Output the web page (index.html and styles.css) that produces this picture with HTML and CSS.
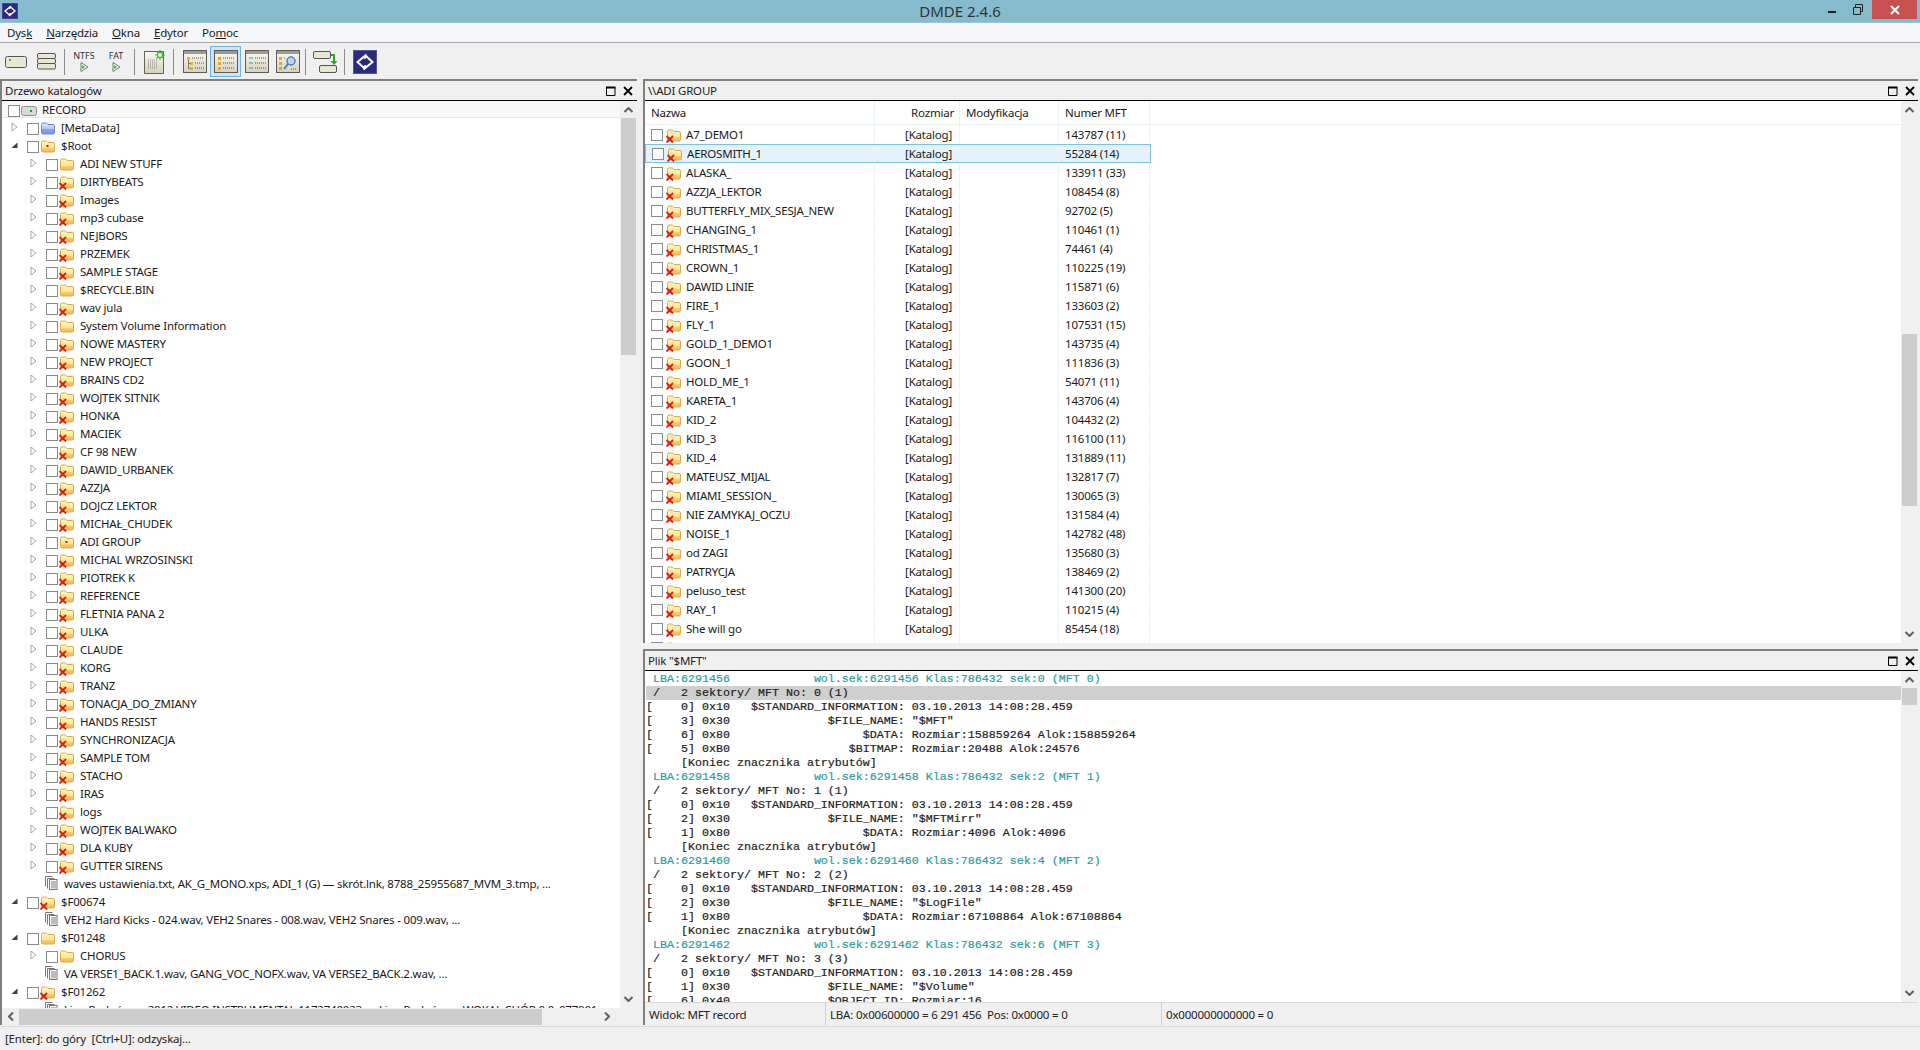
FILE: index.html
```html
<!DOCTYPE html>
<html lang="pl">
<head>
    <meta charset="UTF-8">
    <title>DMDE 2.4.6</title>
    <link rel="stylesheet" href="styles.css">
</head>
<body>
<svg class="defs" width="0" height="0">
    <defs>
        <linearGradient id="fold" x1="0" y1="0" x2="0" y2="1">
            <stop offset="0" stop-color="#fff5c4"/>
            <stop offset=".62" stop-color="#fee594"/>
            <stop offset=".68" stop-color="#f9cb6c"/>
            <stop offset="1" stop-color="#f4b854"/>
        </linearGradient>
        <linearGradient id="foldblue" x1="0" y1="0" x2="0" y2="1">
            <stop offset="0" stop-color="#dfe6fb"/>
            <stop offset=".5" stop-color="#b9c8f4"/>
            <stop offset=".55" stop-color="#88a4ec"/>
            <stop offset="1" stop-color="#7a98e6"/>
        </linearGradient>
        <linearGradient id="panelbg" x1="0" y1="0" x2="0" y2="1">
            <stop offset="0" stop-color="#fbfaf3"/>
            <stop offset="1" stop-color="#d5d1ba"/>
        </linearGradient>
        <symbol id="folder" viewBox="0 0 16 16">
            <path d="M1.500 12.500v-8a1.500 1.500 0 0 1 1.500-1.500h3.500l1.500 1.500h5a1.500 1.500 0 0 1 1.500 1.500v6.500a1.500 1.500 0 0 1-1.500 1.500h-10a1.500 1.500 0 0 1-1.500-1.500z" fill="url(#fold)" stroke="#dcaa48"/>
        </symbol>
        <symbol id="folder-x" viewBox="0 0 16 16">
            <path d="M1.500 12.500v-8a1.500 1.500 0 0 1 1.500-1.500h3.500l1.500 1.500h5a1.500 1.500 0 0 1 1.500 1.500v6.500a1.500 1.500 0 0 1-1.500 1.500h-10a1.500 1.500 0 0 1-1.500-1.500z" fill="url(#fold)" stroke="#dcaa48"/>
            <path d="M.5 9l6.500 6.500M7 9l-6.500 6.500" stroke="#e01818" stroke-width="1.800" fill="none"/>
        </symbol>
        <symbol id="folder-dot" viewBox="0 0 16 16">
            <path d="M1.500 12.500v-8a1.500 1.500 0 0 1 1.500-1.500h3.500l1.500 1.500h5a1.500 1.500 0 0 1 1.500 1.500v6.500a1.500 1.500 0 0 1-1.500 1.500h-10a1.500 1.500 0 0 1-1.500-1.500z" fill="url(#fold)" stroke="#dcaa48"/>
            <rect x="6.500" y="7" width="2" height="2" fill="#d81010"/>
        </symbol>
        <symbol id="folder-blue" viewBox="0 0 16 16">
            <path d="M1.500 12.500v-8a1.500 1.500 0 0 1 1.500-1.500h3.500l1.500 1.500h5a1.500 1.500 0 0 1 1.500 1.500v6.500a1.500 1.500 0 0 1-1.500 1.500h-10a1.500 1.500 0 0 1-1.500-1.500z" fill="url(#foldblue)" stroke="#6f86d8"/>
        </symbol>
        <symbol id="files" viewBox="0 0 14 16">
            <path d="M1.500 11.500v-10h7M3.500 13.500v-10h7" fill="none" stroke="#777"/>
            <rect x="5.500" y="4.500" width="7.500" height="10" fill="#fff" stroke="#777"/>
            <rect x="7" y="6" width="5" height="7.500" fill="#bbb"/>
        </symbol>
        <symbol id="closed" viewBox="0 0 7 10">
            <path d="M1 1l5 4-5 4z" fill="#fff" stroke="#a6a6a6"/>
        </symbol>
        <symbol id="open" viewBox="0 0 7 10">
            <path d="M6.500 2.500v5.500h-6z" fill="#404040"/>
        </symbol>
        <symbol id="disk" viewBox="0 0 16 10">
            <rect x=".5" y=".5" width="15" height="9" rx="2" fill="#d9d9d9" stroke="#909090"/>
            <rect x="9" y="4" width="2" height="2" fill="#14a514"/>
        </symbol>
        <symbol id="up" viewBox="0 0 9 6"><path d="M.5 5l4-4 4 4" fill="none" stroke="#606060" stroke-width="2"/></symbol>
        <symbol id="down" viewBox="0 0 9 6"><path d="M.5 1l4 4 4-4" fill="none" stroke="#606060" stroke-width="2"/></symbol>
        <symbol id="left" viewBox="0 0 6 9"><path d="M5 .5l-4 4 4 4" fill="none" stroke="#606060" stroke-width="2"/></symbol>
        <symbol id="right" viewBox="0 0 6 9"><path d="M1 .5l4 4-4 4" fill="none" stroke="#606060" stroke-width="2"/></symbol>
        <symbol id="maximize" viewBox="0 0 10 10"><path d="M.5 1.500h8.500v8h-8.500z" fill="none" stroke="#000"/><path d="M0 1.500h9.500" stroke="#000" stroke-width="2"/></symbol>
        <symbol id="cross" viewBox="0 0 10 10"><path d="M1 1l8 8M9 1l-8 8" stroke="#000" stroke-width="1.800"/></symbol>
        <symbol id="play" viewBox="0 0 9 10"><path d="M1 .5l7 4.500-7 4.500z" fill="#f4f4f4" stroke="#777"/><path d="M2 3v4l3.500-2z" fill="#5cc040"/></symbol>
        <symbol id="logo" viewBox="0 0 24 24">
            <rect width="24" height="24" fill="#2b2b7e"/>
            <rect x=".5" y=".5" width="23" height="23" fill="none" stroke="#55558f"/>
            <path d="M13.500 4.500l-9 7.500 6 5.500 2.500-2M10.500 19.500l9-7.500-6-5.500-2.500 2" fill="none" stroke="#fff" stroke-width="2"/>
        </symbol>
        <symbol id="panel" viewBox="0 0 24 23">
            <rect x=".5" y=".5" width="23" height="22" fill="url(#panelbg)" stroke="#5c5c56"/>
            <rect x="1" y="1" width="22" height="3" fill="#9a9a92"/>
        </symbol>
    </defs>
</svg>

<div class="titlebar">
    <div class="title-left">
        <svg class="app-icon"><use href="#logo"/></svg>
    </div>
    <div class="title-text">DMDE 2.4.6</div>
    <div class="win-controls">
        <svg class="win-btn" width="26" height="20" viewBox="0 0 26 20"><rect x="8" y="11" width="8" height="2" fill="#222"/></svg>
        <svg class="win-btn" width="26" height="20" viewBox="0 0 26 20"><path d="M7.500 7.500h7v7h-7zM9.500 7v-2.500h7v7h-2" fill="none" stroke="#222" stroke-width="1"/></svg>
        <div class="win-close">
            <svg width="10" height="10" viewBox="0 0 10 10"><path d="M1 1l8 8M9 1l-8 8" stroke="#fff" stroke-width="2"/></svg>
        </div>
    </div>
</div>

<div class="menubar">
    <span class="menu-item">Dys<u>k</u></span>
    <span class="menu-item"><u>N</u>arzędzia</span>
    <span class="menu-item"><u>O</u>kna</span>
    <span class="menu-item"><u>E</u>dytor</span>
    <span class="menu-item">Po<u>m</u>oc</span>
</div>

<div class="toolbar">
    <div class="tool">
        <svg width="22" height="12" viewBox="0 0 22 12"><rect x=".5" y=".5" width="21" height="11" rx="2" fill="#e9e6d4" stroke="#555"/><rect x="4" y="3" width="2" height="2" fill="#2fc82f"/></svg>
    </div>
    <div class="tool">
        <svg width="19" height="17" viewBox="0 0 19 17"><g fill="#e9e6d4" stroke="#555"><rect x=".5" y=".5" width="18" height="5" rx="1.500"/><rect x=".5" y="5.500" width="18" height="5" rx="1.500"/><rect x=".5" y="10.500" width="18" height="5.500" rx="1.500"/></g></svg>
    </div>
    <div class="sep"></div>
    <div class="tool tool-text">
        <span class="tool-label">NTFS</span>
        <svg width="9" height="10"><use href="#play"/></svg>
    </div>
    <div class="tool tool-text">
        <span class="tool-label">FAT</span>
        <svg width="9" height="10"><use href="#play"/></svg>
    </div>
    <div class="sep"></div>
    <div class="tool tool-wide">
        <svg width="22" height="24" viewBox="0 0 22 24">
            <rect x=".5" y="1.500" width="19" height="22" fill="url(#panelbg)" stroke="#66665f"/>
            <path d="M4 10h10M4 12h10M4 14h10M4 16h10M4 18h10" stroke="#8a8a84" stroke-dasharray="1 1"/>
            <path d="M16 0v10M11 5h10M12.500 1.500l7 7M19.500 1.500l-7 7" stroke="#35c035" stroke-width="1.200"/>
            <circle cx="16" cy="5" r="2.500" fill="#eaffd8" stroke="#35a035"/>
        </svg>
    </div>
    <div class="sep sep-after"></div>
    <div class="tool">
        <svg width="24" height="23" viewBox="0 0 24 23">
            <use href="#panel" width="24" height="23"/>
            <path d="M4 7h3v3h-3zM7 12h3v3h-3zM7 17h3v3h-3z" fill="#e6b33a"/>
            <path d="M5.500 10v8.500h2M5.500 13.500h2" fill="none" stroke="#777"/>
            <path d="M9 8h12M12 13h9M12 18h9" stroke="#555" stroke-dasharray="1 1"/>
        </svg>
    </div>
    <div class="tool tool-active">
        <svg width="24" height="23" viewBox="0 0 24 23">
            <use href="#panel" width="24" height="23"/>
            <path d="M4 7h3v3h-3zM4 12h3v3h-3zM4 17h3v3h-3z" fill="#e6a62a"/>
            <path d="M9 8h12M9 13h12M9 18h12" stroke="#555" stroke-dasharray="1 1"/>
        </svg>
    </div>
    <div class="tool">
        <svg width="24" height="23" viewBox="0 0 24 23">
            <use href="#panel" width="24" height="23"/>
            <path d="M4 8h4M4 13h4M4 18h4" stroke="#22b3a0" stroke-width="1.200"/>
            <path d="M10 8h11M10 13h11M10 18h11" stroke="#555" stroke-dasharray="1 1"/>
        </svg>
    </div>
    <div class="tool">
        <svg width="24" height="23" viewBox="0 0 24 23">
            <use href="#panel" width="24" height="23"/>
            <path d="M3 7h3v3h-3zM3 12h3v3h-3zM3 17h3v3h-3z" fill="#e6a62a"/>
            <circle cx="15" cy="11" r="4" fill="#bcd9f2" stroke="#4a82c0" stroke-width="1.500"/>
            <path d="M12 14l-4 5" stroke="#4a82c0" stroke-width="2"/>
            <path d="M8 8h2M15 19h6" stroke="#555" stroke-dasharray="1 1"/>
        </svg>
    </div>
    <div class="sep"></div>
    <div class="tool tool-wide">
        <svg width="25" height="22" viewBox="0 0 25 22">
            <g fill="#e9e6d4" stroke="#555"><rect x=".5" y=".5" width="17" height="7" rx="1.500"/><rect x="6.500" y="14.500" width="17" height="7" rx="1.500"/></g>
            <path d="M18 4h3v7" fill="none" stroke="#2ea62e" stroke-width="2"/>
            <path d="M17.500 10h7l-3.500 4z" fill="#2ea62e"/>
        </svg>
    </div>
    <div class="sep"></div>
    <div class="tool tool-wide">
        <svg width="24" height="24"><use href="#logo"/></svg>
    </div>
</div>

<div class="workspace">
    <section class="pane tree-pane">
        <header class="pane-title">
            <span>Drzewo katalogów</span>
            <svg class="pane-btn"><use href="#maximize"/></svg>
            <svg class="pane-btn pane-btn-close"><use href="#cross"/></svg>
        </header>
        <div class="tree-body">
            <div class="tree-scroll">
                <div class="tree-root"><span class="check"></span><svg class="ico disk"><use href="#disk"/></svg><span class="label">RECORD</span></div>
                <div class="tree-row l1"><svg class="exp"><use href="#closed"/></svg><span class="check"></span><svg class="ico"><use href="#folder-blue"/></svg><span class="label">[MetaData]</span></div>
                <div class="tree-row l1"><svg class="exp"><use href="#open"/></svg><span class="check"></span><svg class="ico"><use href="#folder-dot"/></svg><span class="label">$Root</span></div>
                <div class="tree-row l2"><svg class="exp"><use href="#closed"/></svg><span class="check"></span><svg class="ico"><use href="#folder"/></svg><span class="label">ADI NEW STUFF</span></div>
                <div class="tree-row l2"><svg class="exp"><use href="#closed"/></svg><span class="check"></span><svg class="ico"><use href="#folder-x"/></svg><span class="label">DIRTYBEATS</span></div>
                <div class="tree-row l2"><svg class="exp"><use href="#closed"/></svg><span class="check"></span><svg class="ico"><use href="#folder-x"/></svg><span class="label">Images</span></div>
                <div class="tree-row l2"><svg class="exp"><use href="#closed"/></svg><span class="check"></span><svg class="ico"><use href="#folder-x"/></svg><span class="label">mp3 cubase</span></div>
                <div class="tree-row l2"><svg class="exp"><use href="#closed"/></svg><span class="check"></span><svg class="ico"><use href="#folder-x"/></svg><span class="label">NEJBORS</span></div>
                <div class="tree-row l2"><svg class="exp"><use href="#closed"/></svg><span class="check"></span><svg class="ico"><use href="#folder-x"/></svg><span class="label">PRZEMEK</span></div>
                <div class="tree-row l2"><svg class="exp"><use href="#closed"/></svg><span class="check"></span><svg class="ico"><use href="#folder-x"/></svg><span class="label">SAMPLE STAGE</span></div>
                <div class="tree-row l2"><svg class="exp"><use href="#closed"/></svg><span class="check"></span><svg class="ico"><use href="#folder"/></svg><span class="label">$RECYCLE.BIN</span></div>
                <div class="tree-row l2"><svg class="exp"><use href="#closed"/></svg><span class="check"></span><svg class="ico"><use href="#folder-x"/></svg><span class="label">wav jula</span></div>
                <div class="tree-row l2"><svg class="exp"><use href="#closed"/></svg><span class="check"></span><svg class="ico"><use href="#folder"/></svg><span class="label">System Volume Information</span></div>
                <div class="tree-row l2"><svg class="exp"><use href="#closed"/></svg><span class="check"></span><svg class="ico"><use href="#folder-x"/></svg><span class="label">NOWE MASTERY</span></div>
                <div class="tree-row l2"><svg class="exp"><use href="#closed"/></svg><span class="check"></span><svg class="ico"><use href="#folder-x"/></svg><span class="label">NEW PROJECT</span></div>
                <div class="tree-row l2"><svg class="exp"><use href="#closed"/></svg><span class="check"></span><svg class="ico"><use href="#folder-x"/></svg><span class="label">BRAINS CD2</span></div>
                <div class="tree-row l2"><svg class="exp"><use href="#closed"/></svg><span class="check"></span><svg class="ico"><use href="#folder-x"/></svg><span class="label">WOJTEK SITNIK</span></div>
                <div class="tree-row l2"><svg class="exp"><use href="#closed"/></svg><span class="check"></span><svg class="ico"><use href="#folder-x"/></svg><span class="label">HONKA</span></div>
                <div class="tree-row l2"><svg class="exp"><use href="#closed"/></svg><span class="check"></span><svg class="ico"><use href="#folder-x"/></svg><span class="label">MACIEK</span></div>
                <div class="tree-row l2"><svg class="exp"><use href="#closed"/></svg><span class="check"></span><svg class="ico"><use href="#folder-x"/></svg><span class="label">CF 98 NEW</span></div>
                <div class="tree-row l2"><svg class="exp"><use href="#closed"/></svg><span class="check"></span><svg class="ico"><use href="#folder-x"/></svg><span class="label">DAWID_URBANEK</span></div>
                <div class="tree-row l2"><svg class="exp"><use href="#closed"/></svg><span class="check"></span><svg class="ico"><use href="#folder-x"/></svg><span class="label">AZZJA</span></div>
                <div class="tree-row l2"><svg class="exp"><use href="#closed"/></svg><span class="check"></span><svg class="ico"><use href="#folder-x"/></svg><span class="label">DOJCZ LEKTOR</span></div>
                <div class="tree-row l2"><svg class="exp"><use href="#closed"/></svg><span class="check"></span><svg class="ico"><use href="#folder-x"/></svg><span class="label">MICHAŁ_CHUDEK</span></div>
                <div class="tree-row l2"><svg class="exp"><use href="#closed"/></svg><span class="check"></span><svg class="ico"><use href="#folder-dot"/></svg><span class="label">ADI GROUP</span></div>
                <div class="tree-row l2"><svg class="exp"><use href="#closed"/></svg><span class="check"></span><svg class="ico"><use href="#folder-x"/></svg><span class="label">MICHAL WRZOSINSKI</span></div>
                <div class="tree-row l2"><svg class="exp"><use href="#closed"/></svg><span class="check"></span><svg class="ico"><use href="#folder-x"/></svg><span class="label">PIOTREK K</span></div>
                <div class="tree-row l2"><svg class="exp"><use href="#closed"/></svg><span class="check"></span><svg class="ico"><use href="#folder-x"/></svg><span class="label">REFERENCE</span></div>
                <div class="tree-row l2"><svg class="exp"><use href="#closed"/></svg><span class="check"></span><svg class="ico"><use href="#folder-x"/></svg><span class="label">FLETNIA PANA 2</span></div>
                <div class="tree-row l2"><svg class="exp"><use href="#closed"/></svg><span class="check"></span><svg class="ico"><use href="#folder-x"/></svg><span class="label">ULKA</span></div>
                <div class="tree-row l2"><svg class="exp"><use href="#closed"/></svg><span class="check"></span><svg class="ico"><use href="#folder-x"/></svg><span class="label">CLAUDE</span></div>
                <div class="tree-row l2"><svg class="exp"><use href="#closed"/></svg><span class="check"></span><svg class="ico"><use href="#folder-x"/></svg><span class="label">KORG</span></div>
                <div class="tree-row l2"><svg class="exp"><use href="#closed"/></svg><span class="check"></span><svg class="ico"><use href="#folder-x"/></svg><span class="label">TRANZ</span></div>
                <div class="tree-row l2"><svg class="exp"><use href="#closed"/></svg><span class="check"></span><svg class="ico"><use href="#folder-x"/></svg><span class="label">TONACJA_DO_ZMIANY</span></div>
                <div class="tree-row l2"><svg class="exp"><use href="#closed"/></svg><span class="check"></span><svg class="ico"><use href="#folder-x"/></svg><span class="label">HANDS RESIST</span></div>
                <div class="tree-row l2"><svg class="exp"><use href="#closed"/></svg><span class="check"></span><svg class="ico"><use href="#folder-x"/></svg><span class="label">SYNCHRONIZACJA</span></div>
                <div class="tree-row l2"><svg class="exp"><use href="#closed"/></svg><span class="check"></span><svg class="ico"><use href="#folder-x"/></svg><span class="label">SAMPLE TOM</span></div>
                <div class="tree-row l2"><svg class="exp"><use href="#closed"/></svg><span class="check"></span><svg class="ico"><use href="#folder-x"/></svg><span class="label">STACHO</span></div>
                <div class="tree-row l2"><svg class="exp"><use href="#closed"/></svg><span class="check"></span><svg class="ico"><use href="#folder-x"/></svg><span class="label">IRAS</span></div>
                <div class="tree-row l2"><svg class="exp"><use href="#closed"/></svg><span class="check"></span><svg class="ico"><use href="#folder-x"/></svg><span class="label">logs</span></div>
                <div class="tree-row l2"><svg class="exp"><use href="#closed"/></svg><span class="check"></span><svg class="ico"><use href="#folder-x"/></svg><span class="label">WOJTEK BALWAKO</span></div>
                <div class="tree-row l2"><svg class="exp"><use href="#closed"/></svg><span class="check"></span><svg class="ico"><use href="#folder-x"/></svg><span class="label">DLA KUBY</span></div>
                <div class="tree-row l2"><svg class="exp"><use href="#closed"/></svg><span class="check"></span><svg class="ico"><use href="#folder-x"/></svg><span class="label">GUTTER SIRENS</span></div>
                <div class="tree-row file-row"><svg class="file-ico"><use href="#files"/></svg><span class="label">waves ustawienia.txt, AK_G_MONO.xps, ADI_1 (G) — skrót.lnk, 8788_25955687_MVM_3.tmp, ...</span></div>
                <div class="tree-row l1"><svg class="exp"><use href="#open"/></svg><span class="check"></span><svg class="ico"><use href="#folder-x"/></svg><span class="label">$F00674</span></div>
                <div class="tree-row file-row"><svg class="file-ico"><use href="#files"/></svg><span class="label">VEH2 Hard Kicks - 024.wav, VEH2 Snares - 008.wav, VEH2 Snares - 009.wav, ...</span></div>
                <div class="tree-row l1"><svg class="exp"><use href="#open"/></svg><span class="check"></span><svg class="ico"><use href="#folder"/></svg><span class="label">$F01248</span></div>
                <div class="tree-row l2"><svg class="exp"><use href="#closed"/></svg><span class="check"></span><svg class="ico"><use href="#folder"/></svg><span class="label">CHORUS</span></div>
                <div class="tree-row file-row"><svg class="file-ico"><use href="#files"/></svg><span class="label">VA VERSE1_BACK.1.wav, GANG_VOC_NOFX.wav, VA VERSE2_BACK.2.wav, ...</span></div>
                <div class="tree-row l1"><svg class="exp"><use href="#open"/></svg><span class="check"></span><svg class="ico"><use href="#folder-x"/></svg><span class="label">$F01262</span></div>
                <div class="tree-row file-row"><svg class="file-ico"><use href="#files"/></svg><span class="label">Lipa Podgórze - 2012 VIDEO INSTRUMENTAL 1172740023 ..., Lipa Podgórze - WOKAL CHÓR 0.0_077901</span></div>
            </div>
            <div class="vscroll">
                <svg class="arrow"><use href="#up"/></svg>
                <div class="thumb tree-thumb"></div>
                <svg class="arrow arrow-end"><use href="#down"/></svg>
            </div>
        </div>
        <div class="hscroll">
            <svg class="arrow-h"><use href="#left"/></svg>
            <div class="hthumb"></div>
            <svg class="arrow-h arrow-h-end"><use href="#right"/></svg>
        </div>
    </section>

    <div class="right-col">
        <section class="pane list-pane">
            <header class="pane-title">
                <span>\\ADI GROUP</span>
                <svg class="pane-btn"><use href="#maximize"/></svg>
                <svg class="pane-btn pane-btn-close"><use href="#cross"/></svg>
            </header>
            <div class="list-body">
                <div class="list-scroll">
                    <div class="list-head">
                        <div class="col col-name">Nazwa</div>
                        <div class="col col-size">Rozmiar</div>
                        <div class="col col-mod">Modyfikacja</div>
                        <div class="col col-mft">Numer MFT</div>
                    </div>
                    <div class="list-row"><div class="col col-name"><span class="check"></span><svg class="ico"><use href="#folder-x"/></svg>A7_DEMO1</div><div class="col col-size">[Katalog]</div><div class="col col-mod"></div><div class="col col-mft">143787 (11)</div></div>
                    <div class="list-row selected"><div class="col col-name"><span class="check"></span><svg class="ico"><use href="#folder-x"/></svg>AEROSMITH_1</div><div class="col col-size">[Katalog]</div><div class="col col-mod"></div><div class="col col-mft">55284 (14)</div></div>
                    <div class="list-row"><div class="col col-name"><span class="check"></span><svg class="ico"><use href="#folder-x"/></svg>ALASKA_</div><div class="col col-size">[Katalog]</div><div class="col col-mod"></div><div class="col col-mft">133911 (33)</div></div>
                    <div class="list-row"><div class="col col-name"><span class="check"></span><svg class="ico"><use href="#folder-x"/></svg>AZZJA_LEKTOR</div><div class="col col-size">[Katalog]</div><div class="col col-mod"></div><div class="col col-mft">108454 (8)</div></div>
                    <div class="list-row"><div class="col col-name"><span class="check"></span><svg class="ico"><use href="#folder-x"/></svg>BUTTERFLY_MIX_SESJA_NEW</div><div class="col col-size">[Katalog]</div><div class="col col-mod"></div><div class="col col-mft">92702 (5)</div></div>
                    <div class="list-row"><div class="col col-name"><span class="check"></span><svg class="ico"><use href="#folder-x"/></svg>CHANGING_1</div><div class="col col-size">[Katalog]</div><div class="col col-mod"></div><div class="col col-mft">110461 (1)</div></div>
                    <div class="list-row"><div class="col col-name"><span class="check"></span><svg class="ico"><use href="#folder-x"/></svg>CHRISTMAS_1</div><div class="col col-size">[Katalog]</div><div class="col col-mod"></div><div class="col col-mft">74461 (4)</div></div>
                    <div class="list-row"><div class="col col-name"><span class="check"></span><svg class="ico"><use href="#folder-x"/></svg>CROWN_1</div><div class="col col-size">[Katalog]</div><div class="col col-mod"></div><div class="col col-mft">110225 (19)</div></div>
                    <div class="list-row"><div class="col col-name"><span class="check"></span><svg class="ico"><use href="#folder-x"/></svg>DAWID LINIE</div><div class="col col-size">[Katalog]</div><div class="col col-mod"></div><div class="col col-mft">115871 (6)</div></div>
                    <div class="list-row"><div class="col col-name"><span class="check"></span><svg class="ico"><use href="#folder-x"/></svg>FIRE_1</div><div class="col col-size">[Katalog]</div><div class="col col-mod"></div><div class="col col-mft">133603 (2)</div></div>
                    <div class="list-row"><div class="col col-name"><span class="check"></span><svg class="ico"><use href="#folder-x"/></svg>FLY_1</div><div class="col col-size">[Katalog]</div><div class="col col-mod"></div><div class="col col-mft">107531 (15)</div></div>
                    <div class="list-row"><div class="col col-name"><span class="check"></span><svg class="ico"><use href="#folder-x"/></svg>GOLD_1_DEMO1</div><div class="col col-size">[Katalog]</div><div class="col col-mod"></div><div class="col col-mft">143735 (4)</div></div>
                    <div class="list-row"><div class="col col-name"><span class="check"></span><svg class="ico"><use href="#folder-x"/></svg>GOON_1</div><div class="col col-size">[Katalog]</div><div class="col col-mod"></div><div class="col col-mft">111836 (3)</div></div>
                    <div class="list-row"><div class="col col-name"><span class="check"></span><svg class="ico"><use href="#folder-x"/></svg>HOLD_ME_1</div><div class="col col-size">[Katalog]</div><div class="col col-mod"></div><div class="col col-mft">54071 (11)</div></div>
                    <div class="list-row"><div class="col col-name"><span class="check"></span><svg class="ico"><use href="#folder-x"/></svg>KARETA_1</div><div class="col col-size">[Katalog]</div><div class="col col-mod"></div><div class="col col-mft">143706 (4)</div></div>
                    <div class="list-row"><div class="col col-name"><span class="check"></span><svg class="ico"><use href="#folder-x"/></svg>KID_2</div><div class="col col-size">[Katalog]</div><div class="col col-mod"></div><div class="col col-mft">104432 (2)</div></div>
                    <div class="list-row"><div class="col col-name"><span class="check"></span><svg class="ico"><use href="#folder-x"/></svg>KID_3</div><div class="col col-size">[Katalog]</div><div class="col col-mod"></div><div class="col col-mft">116100 (11)</div></div>
                    <div class="list-row"><div class="col col-name"><span class="check"></span><svg class="ico"><use href="#folder-x"/></svg>KID_4</div><div class="col col-size">[Katalog]</div><div class="col col-mod"></div><div class="col col-mft">131889 (11)</div></div>
                    <div class="list-row"><div class="col col-name"><span class="check"></span><svg class="ico"><use href="#folder-x"/></svg>MATEUSZ_MIJAL</div><div class="col col-size">[Katalog]</div><div class="col col-mod"></div><div class="col col-mft">132817 (7)</div></div>
                    <div class="list-row"><div class="col col-name"><span class="check"></span><svg class="ico"><use href="#folder-x"/></svg>MIAMI_SESSION_</div><div class="col col-size">[Katalog]</div><div class="col col-mod"></div><div class="col col-mft">130065 (3)</div></div>
                    <div class="list-row"><div class="col col-name"><span class="check"></span><svg class="ico"><use href="#folder-x"/></svg>NIE ZAMYKAJ_OCZU</div><div class="col col-size">[Katalog]</div><div class="col col-mod"></div><div class="col col-mft">131584 (4)</div></div>
                    <div class="list-row"><div class="col col-name"><span class="check"></span><svg class="ico"><use href="#folder-x"/></svg>NOISE_1</div><div class="col col-size">[Katalog]</div><div class="col col-mod"></div><div class="col col-mft">142782 (48)</div></div>
                    <div class="list-row"><div class="col col-name"><span class="check"></span><svg class="ico"><use href="#folder-x"/></svg>od ZAGI</div><div class="col col-size">[Katalog]</div><div class="col col-mod"></div><div class="col col-mft">135680 (3)</div></div>
                    <div class="list-row"><div class="col col-name"><span class="check"></span><svg class="ico"><use href="#folder-x"/></svg>PATRYCJA</div><div class="col col-size">[Katalog]</div><div class="col col-mod"></div><div class="col col-mft">138469 (2)</div></div>
                    <div class="list-row"><div class="col col-name"><span class="check"></span><svg class="ico"><use href="#folder-x"/></svg>peluso_test</div><div class="col col-size">[Katalog]</div><div class="col col-mod"></div><div class="col col-mft">141300 (20)</div></div>
                    <div class="list-row"><div class="col col-name"><span class="check"></span><svg class="ico"><use href="#folder-x"/></svg>RAY_1</div><div class="col col-size">[Katalog]</div><div class="col col-mod"></div><div class="col col-mft">110215 (4)</div></div>
                    <div class="list-row"><div class="col col-name"><span class="check"></span><svg class="ico"><use href="#folder-x"/></svg>She will go</div><div class="col col-size">[Katalog]</div><div class="col col-mod"></div><div class="col col-mft">85454 (18)</div></div>
                    <div class="list-row"><div class="col col-name"><span class="check"></span><svg class="ico"><use href="#folder-x"/></svg></div><div class="col col-size"></div><div class="col col-mod"></div><div class="col col-mft"></div></div>
                </div>
                <div class="vscroll">
                    <svg class="arrow"><use href="#up"/></svg>
                    <div class="thumb list-thumb"></div>
                    <svg class="arrow arrow-end"><use href="#down"/></svg>
                </div>
            </div>
        </section>

        <section class="pane log-pane">
            <header class="pane-title">
                <span>Plik "$MFT"</span>
                <svg class="pane-btn"><use href="#maximize"/></svg>
                <svg class="pane-btn pane-btn-close"><use href="#cross"/></svg>
            </header>
            <div class="log-body">
                <div class="log-scroll">
<pre class="log-row lba"> LBA:6291456            wol.sek:6291456 Klas:786432 sek:0 (MFT 0)</pre>
<pre class="log-row current"> /   2 sektory/ MFT No: 0 (1)</pre>
<pre class="log-row">[    0] 0x10   $STANDARD_INFORMATION: 03.10.2013 14:08:28.459</pre>
<pre class="log-row">[    3] 0x30              $FILE_NAME: "$MFT"</pre>
<pre class="log-row">[    6] 0x80                   $DATA: Rozmiar:158859264 Alok:158859264</pre>
<pre class="log-row">[    5] 0xB0                 $BITMAP: Rozmiar:20488 Alok:24576</pre>
<pre class="log-row">     [Koniec znacznika atrybutów]</pre>
<pre class="log-row lba"> LBA:6291458            wol.sek:6291458 Klas:786432 sek:2 (MFT 1)</pre>
<pre class="log-row"> /   2 sektory/ MFT No: 1 (1)</pre>
<pre class="log-row">[    0] 0x10   $STANDARD_INFORMATION: 03.10.2013 14:08:28.459</pre>
<pre class="log-row">[    2] 0x30              $FILE_NAME: "$MFTMirr"</pre>
<pre class="log-row">[    1] 0x80                   $DATA: Rozmiar:4096 Alok:4096</pre>
<pre class="log-row">     [Koniec znacznika atrybutów]</pre>
<pre class="log-row lba"> LBA:6291460            wol.sek:6291460 Klas:786432 sek:4 (MFT 2)</pre>
<pre class="log-row"> /   2 sektory/ MFT No: 2 (2)</pre>
<pre class="log-row">[    0] 0x10   $STANDARD_INFORMATION: 03.10.2013 14:08:28.459</pre>
<pre class="log-row">[    2] 0x30              $FILE_NAME: "$LogFile"</pre>
<pre class="log-row">[    1] 0x80                   $DATA: Rozmiar:67108864 Alok:67108864</pre>
<pre class="log-row">     [Koniec znacznika atrybutów]</pre>
<pre class="log-row lba"> LBA:6291462            wol.sek:6291462 Klas:786432 sek:6 (MFT 3)</pre>
<pre class="log-row"> /   2 sektory/ MFT No: 3 (3)</pre>
<pre class="log-row">[    0] 0x10   $STANDARD_INFORMATION: 03.10.2013 14:08:28.459</pre>
<pre class="log-row">[    1] 0x30              $FILE_NAME: "$Volume"</pre>
<pre class="log-row">[    6] 0x40              $OBJECT_ID: Rozmiar:16</pre>
                </div>
                <div class="vscroll">
                    <svg class="arrow"><use href="#up"/></svg>
                    <div class="thumb log-thumb"></div>
                    <svg class="arrow arrow-end"><use href="#down"/></svg>
                </div>
            </div>
            <div class="log-status">
                <div class="cell cell-view">Widok: MFT record</div>
                <div class="cell cell-pos">LBA: 0x00600000 = 6 291 456&nbsp; Pos: 0x0000 = 0</div>
                <div class="cell">0x000000000000 = 0</div>
            </div>
        </section>
    </div>
</div>

<div class="statusbar">[Enter]: do góry&nbsp; [Ctrl+U]: odzyskaj...</div>
</body>
</html>
```

FILE: styles.css
```css
* {
    box-sizing: border-box;
}

html, body {
    margin: 0;
    padding: 0;
}

body {
    width: 1920px;
    height: 1050px;
    overflow: hidden;
    display: flex;
    flex-direction: column;
    background: #f0f0f0;
    color: #1a1a1a;
    font-family: "Noto Sans", "Liberation Sans", sans-serif;
    font-size: 11.5px;
    letter-spacing: -0.2px;
}

.defs {
    position: absolute;
}

/* title */
.titlebar {
    height: 23px;
    flex: none;
    display: grid;
    grid-template-columns: 1fr auto 1fr;
    background: #85bbcd;
    border-bottom: 1px solid #9cc6d4;
}

.app-icon {
    display: block;
    width: 16px;
    height: 16px;
    margin: 3px 0 0 2px;
}

.title-text {
    font-size: 15px;
    letter-spacing: 0;
    line-height: 22px;
    color: #333;
}

.win-controls {
    display: flex;
    justify-content: flex-end;
    padding-right: 3px;
}

.win-close {
    width: 45px;
    height: 19px;
    background: #c75050;
    display: flex;
    align-items: center;
    justify-content: center;
}

/* menu + toolbar */
.menubar {
    height: 20px;
    flex: none;
    display: flex;
    padding-left: 7px;
    gap: 14px;
    background: #f5f6fa;
    border-bottom: 1px solid #aaa;
    line-height: 19px;
}

.menu-item u {
    text-underline-offset: 1px;
}

.toolbar {
    height: 36px;
    flex: none;
    display: flex;
    align-items: center;
    background: #f0f0f0;
    padding-top: 1px;
}

.tool {
    width: 31px;
    height: 31px;
    flex: none;
    display: flex;
    align-items: center;
    justify-content: center;
}

.tool-wide {
    width: 33px;
}

.tool-text {
    width: 32px;
    flex-direction: column;
    gap: 1px;
}

.tool-label {
    font-size: 9px;
    letter-spacing: 0;
    line-height: 10px;
    color: #333;
}

.tool-active {
    background: #cfe4f7;
    border: 1px solid #6fb1e8;
}

.sep {
    width: 1px;
    height: 26px;
    flex: none;
    background: #8c8c8c;
    margin: 0 3px 0 2px;
}

.sep-after {
    margin-right: 5px;
}

/* panes */
.workspace {
    height: 947px;
    flex: none;
    display: flex;
    gap: 6px;
}

.pane {
    display: flex;
    flex-direction: column;
    border-top: 2px solid #7f7f7f;
    border-left: 2px solid #7f7f7f;
    background: #fff;
    overflow: hidden;
}

.pane-title {
    height: 20px;
    flex: none;
    display: flex;
    align-items: center;
    gap: 7px;
    padding: 0 3px;
    background: #f0f0f0;
    border-bottom: 1px solid #000;
    color: #222;
}

.pane-title span {
    flex: 1;
}

.pane-btn {
    width: 10px;
    height: 10px;
}

.tree-pane {
    width: 637px;
    height: 946px;
    flex: none;
}

.tree-pane .pane-title {
    padding-right: 4px;
}

.tree-body {
    flex: 1;
    min-height: 0;
    display: flex;
}

.tree-scroll {
    flex: 1;
    overflow: hidden;
}

.tree-root {
    height: 17px;
    display: flex;
    align-items: center;
    padding-left: 6px;
    background: #f8f8f8;
    border-bottom: 1px solid #e6e6e6;
}

.tree-row {
    height: 18px;
    display: flex;
    align-items: center;
    white-space: nowrap;
}

.l1 {
    padding-left: 9px;
}

.l2 {
    padding-left: 28px;
}

.file-row {
    padding-left: 42px;
}

.exp {
    width: 7px;
    height: 10px;
    flex: none;
    margin-right: 9px;
}

.check {
    width: 12px;
    height: 12px;
    flex: none;
    display: inline-block;
    background: #fff;
    border: 1px solid #8a8a8a;
    margin-top: 3px;
}

.ico {
    width: 16px;
    height: 16px;
    flex: none;
    margin: 2px 0 0 1px;
}

.disk {
    width: 16px;
    height: 10px;
    margin-top: 3px;
}

.label {
    margin-left: 5px;
}

.file-ico {
    width: 14px;
    height: 16px;
    flex: none;
}

.file-row .label {
    margin-left: 6px;
}

/* scrollbars */
.vscroll {
    width: 17px;
    flex: none;
    display: flex;
    flex-direction: column;
    align-items: center;
    background: #f0f0f0;
}

.arrow {
    width: 9px;
    height: 6px;
    flex: none;
    margin: 6px 0 5px;
}

.arrow-end {
    margin: auto 0 6px;
}

.thumb {
    width: 15px;
    flex: none;
    background: #cdcdcd;
}

.tree-thumb {
    height: 237px;
}

.list-thumb {
    height: 172px;
    margin-top: 216px;
}

.log-thumb {
    height: 17px;
}

.hscroll {
    height: 17px;
    flex: none;
    display: flex;
    align-items: center;
    background: #f0f0f0;
    padding: 0 3px 0 6px;
    border-right: 17px solid #f0f0f0;
}

.arrow-h {
    width: 6px;
    height: 9px;
    flex: none;
}

.hthumb {
    width: 523px;
    height: 16px;
    flex: none;
    margin-left: 5px;
    background: #cdcdcd;
}

.arrow-h-end {
    margin-left: auto;
    margin-right: 7px;
}

/* file list */
.right-col {
    width: 1275px;
    flex: none;
    display: flex;
    flex-direction: column;
    gap: 6px;
}

.list-pane {
    height: 564px;
    flex: none;
}

.list-body {
    flex: 1;
    min-height: 0;
    display: flex;
}

.list-scroll {
    flex: 1;
    overflow: hidden;
}

.list-head {
    height: 24px;
    display: flex;
    border-bottom: 1px solid #e8f0f8;
}

.list-row {
    height: 19px;
    display: flex;
    width: 506px;
    border: 1px solid transparent;
    border-left: 0;
}

.list-row.selected {
    background: #e4f2fb;
    border: 1px solid #7cc0ea;
}

.col {
    display: flex;
    align-items: center;
    white-space: nowrap;
    flex: none;
    border-right: 1px solid #eaf1f9;
}

.col-name {
    width: 230px;
    padding-left: 6px;
}

.col-name .ico {
    margin: 0 4px 0 3px;
}

.col-name .check {
    margin-top: 0;
}

.col-size {
    width: 85px;
    justify-content: flex-end;
    padding-right: 7px;
}

.col-mod {
    width: 99px;
    padding-left: 6px;
}

.col-mft {
    width: 91px;
    padding-left: 6px;
}

.selected .col-name {
    width: 229px;
}

.list-head .col-size {
    padding-right: 5px;
}

/* log */
.log-pane {
    height: 376px;
    flex: none;
}

.log-body {
    flex: 1;
    min-height: 0;
    display: flex;
}

.log-scroll {
    flex: 1;
    overflow: hidden;
    padding-top: 1px;
}

.log-row {
    height: 14px;
    margin: 0 0 0 1px;
    font-family: "Liberation Mono", monospace;
    font-size: 11.67px;
    letter-spacing: 0;
    line-height: 14px;
    color: #222;
    -webkit-text-stroke: 0.2px #222;
}

.log-row.lba {
    color: #2a9d9d;
    -webkit-text-stroke: 0.2px #2a9d9d;
}

.log-row.current {
    background: #cfcfcf;
}

.log-status {
    height: 23px;
    flex: none;
    display: flex;
    background: #f0f0f0;
    border-top: 1px solid #d8d8d8;
    line-height: 23px;
    color: #222;
}

.cell {
    padding-left: 4px;
}

.cell-view {
    width: 181px;
    border-right: 1px solid #d0d0d0;
}

.cell-pos {
    width: 336px;
    border-right: 1px solid #d0d0d0;
}

.statusbar {
    flex: 1;
    border-top: 1px solid #dcdcdc;
    padding-left: 5px;
    line-height: 23px;
    color: #222;
}
```
